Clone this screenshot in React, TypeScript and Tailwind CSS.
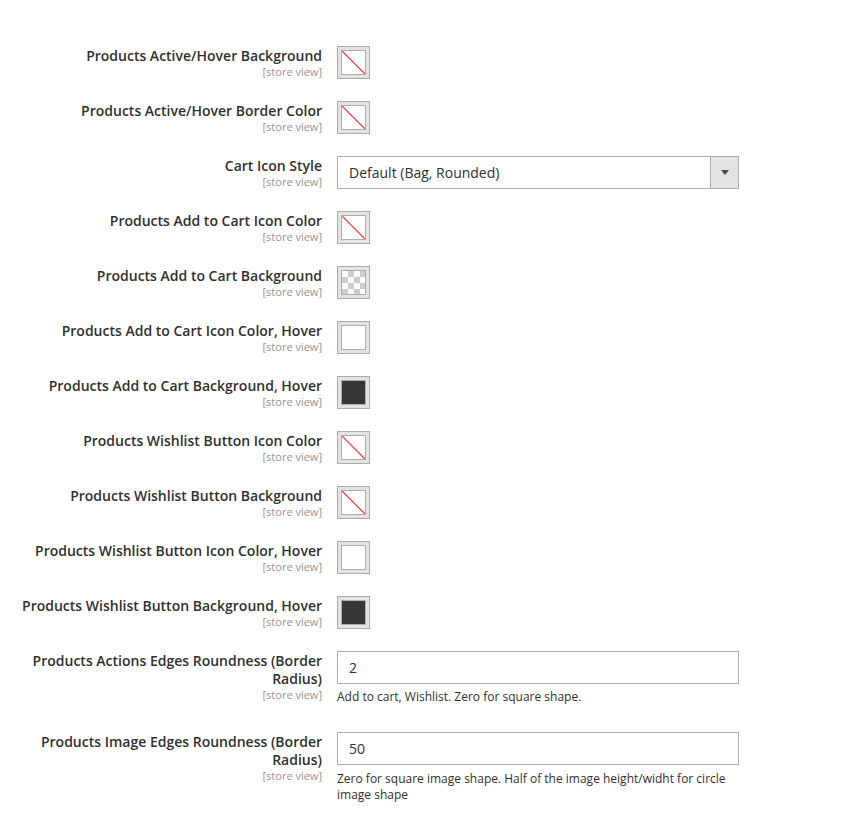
import React from "react";

type Swatch = "none" | "transparent" | "white" | "dark";

type Row =
  | { label: string; kind: "swatch"; swatch: Swatch }
  | { label: string; kind: "select"; value: string }
  | { label: string; kind: "input"; value: string; note: string };

const rows: Row[] = [
  { label: "Products Active/Hover Background", kind: "swatch", swatch: "none" },
  { label: "Products Active/Hover Border Color", kind: "swatch", swatch: "none" },
  { label: "Cart Icon Style", kind: "select", value: "Default (Bag, Rounded)" },
  { label: "Products Add to Cart Icon Color", kind: "swatch", swatch: "none" },
  { label: "Products Add to Cart Background", kind: "swatch", swatch: "transparent" },
  { label: "Products Add to Cart Icon Color, Hover", kind: "swatch", swatch: "white" },
  { label: "Products Add to Cart Background, Hover", kind: "swatch", swatch: "dark" },
  { label: "Products Wishlist Button Icon Color", kind: "swatch", swatch: "none" },
  { label: "Products Wishlist Button Background", kind: "swatch", swatch: "none" },
  { label: "Products Wishlist Button Icon Color, Hover", kind: "swatch", swatch: "white" },
  { label: "Products Wishlist Button Background, Hover", kind: "swatch", swatch: "dark" },
  {
    label: "Products Actions Edges Roundness (Border Radius)",
    kind: "input",
    value: "2",
    note: "Add to cart, Wishlist. Zero for square shape.",
  },
  {
    label: "Products Image Edges Roundness (Border Radius)",
    kind: "input",
    value: "50",
    note: "Zero for square image shape. Half of the image height/widht for circle image shape",
  },
];

// colour picker preview box
function ColorSwatch({ swatch }: { swatch: Swatch }) {
  return (
    <div className="w-[33px] h-[33px] border border-[#adadad] bg-[#e3e3e3] p-[3px]">
      {swatch === "none" && (
        <div className="w-full h-full border border-[#adadad] bg-[linear-gradient(to_top_right,#ffffff_calc(50%-1px),#ff2a2a_50%,#ffffff_calc(50%+1px))]" />
      )}
      {swatch === "transparent" && (
        <div className="w-full h-full border border-[#adadad] bg-[repeating-conic-gradient(#cccccc_0_25%,#ffffff_0_50%)] bg-[length:12px_12px]" />
      )}
      {swatch === "white" && <div className="w-full h-full border border-[#adadad] bg-white" />}
      {swatch === "dark" && <div className="w-full h-full border border-[#adadad] bg-[#363636]" />}
    </div>
  );
}

export default function App() {
  return (
    <div className="min-h-screen bg-white pt-[46px] font-['Open_Sans',sans-serif] text-[#303030]">
      {rows.map((row, idx) => (
        <div
          key={idx}
          className={`flex flex-row ${idx === 11 ? "mb-[27px]" : "mb-[22px]"}`}
        >
          {/* label */}
          <div className="w-[310px] ml-[12px] text-right pt-[1px]">
            <div className="text-[14px] leading-[18px] font-semibold">{row.label}</div>
            <div className="text-[11px] leading-[13px] text-[#939393]">[store view]</div>
          </div>

          {/* control */}
          <div className="ml-[15px] w-[402px]">
            {row.kind === "swatch" && <ColorSwatch swatch={row.swatch} />}
            {row.kind === "select" && (
              <div className="flex flex-row h-[33px] border border-[#adadad] bg-white">
                <div className="flex-grow flex items-center px-[11px] text-[14px]">{row.value}</div>
                <div className="w-[28px] flex items-center justify-center bg-[#e3e3e3] border-l border-[#adadad]">
                  <svg width="8" height="5" viewBox="0 0 8 5">
                    <path d="M0 0 L8 0 L4 5 Z" fill="#514943" />
                  </svg>
                </div>
              </div>
            )}
            {row.kind === "input" && (
              <div>
                <div className="h-[33px] border border-[#adadad] bg-white flex items-center px-[11px] text-[14px]">
                  {row.value}
                </div>
                <div className={`text-[12px] leading-[16px] ${idx === 11 ? "mt-[5px]" : "mt-[6px]"}`}>
                  {row.note}
                </div>
              </div>
            )}
          </div>
        </div>
      ))}
    </div>
  );
}
